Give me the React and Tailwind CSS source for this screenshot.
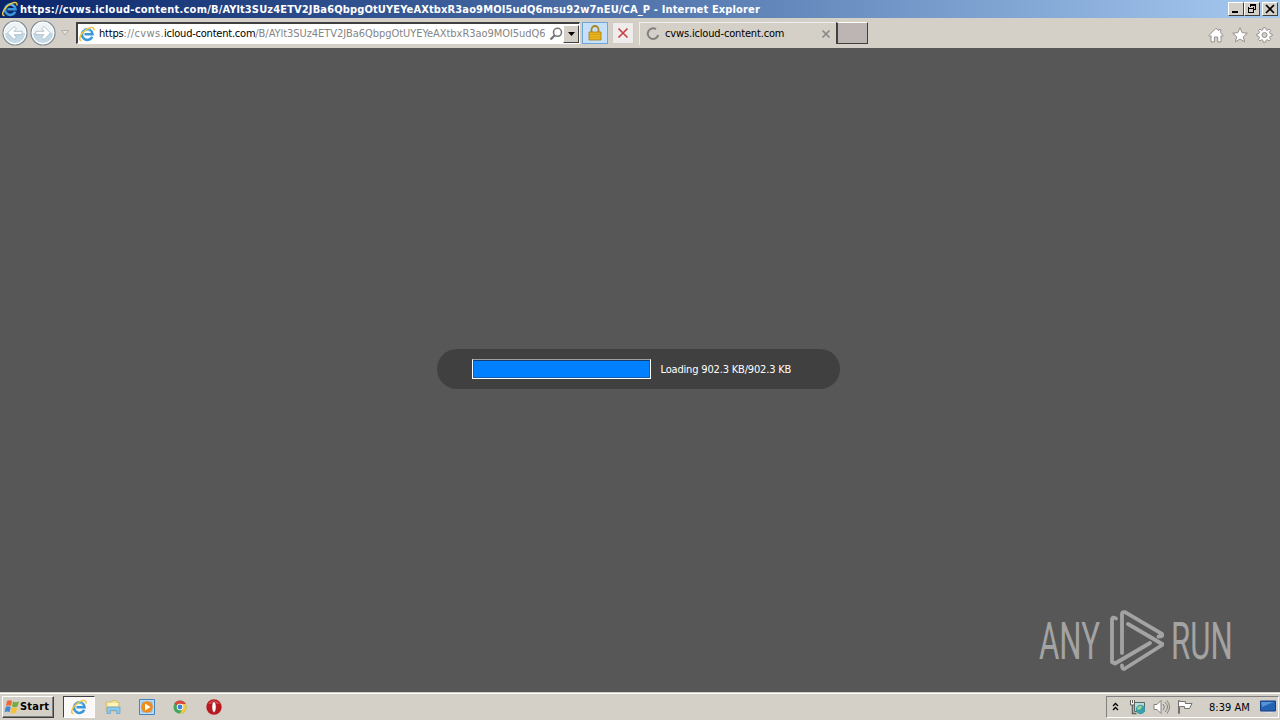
import React from 'react'

const IeIcon = ({ className }) => (
  <svg viewBox="0 0 16 16" className={className}>
    <path d="M13.2 10.700A5.300 5.300 0 1 1 13.600 8.300H5.500" fill="none" stroke="#3a97da" strokeWidth="2.500" />
    <path d="M4 6.400A4.600 4.600 0 0 1 12 5.600" fill="none" stroke="#86d3f7" strokeWidth="1" />
    <path d="M2.500 14.500C-.8 14.800.7 9 5.300 5.100 9.600 1.400 15.800-.3 14.900 4.500" fill="none" stroke="#f1c63c" strokeWidth="1.500" />
  </svg>
)

const NavButton = ({ flip }) => (
  <svg viewBox="0 0 26 26" className={flip ? 'h-[26px] w-[26px] -scale-x-100' : 'h-[26px] w-[26px]'}>
    <circle cx="13" cy="13" r="12" fill="#eef3f6" stroke="#7f8d97" strokeWidth="1.2" />
    <circle cx="13" cy="13" r="10.8" fill="none" stroke="#fff" strokeWidth="1" />
    <path d="M3 13a10 10 0 0 0 20 0Z" fill="#c3d9e6" />
    <path d="m5.500 13 6.500-6.500 2.500 2.300L12 11.300h8.200v3.400H12l2.500 2.500-2.500 2.300Z" fill="#fff" stroke="#a3b6c4" strokeWidth=".8" />
  </svg>
)

const WindowButton = ({ children, className = '' }) => (
  <button className={`flex h-[14px] w-4 items-center justify-center border border-t-white border-l-white border-r-[#404040] border-b-[#404040] bg-[#d4d0c8] ${className}`}>
    <svg viewBox="0 0 12 10" className="h-[10px] w-3 shrink-0" fill="none" stroke="#000" shapeRendering="crispEdges">
      {children}
    </svg>
  </button>
)

const TitleBar = () => (
  <header className="flex h-[18px] items-center bg-linear-to-r from-[#0a246a] to-[#a6caf0] pr-[2px] pl-[2px]">
    <IeIcon className="h-4 w-4 shrink-0" />
    <h1 className="ml-[2px] pt-px text-[11px] leading-[17px] font-bold tracking-[0.14px] whitespace-nowrap text-white">
      <span className="tracking-[0.26px]">https://cvws.icloud-content.com</span>/B/AYlt3SUz4ETV2JBa6QbpgOtUYEYeAXtbxR3ao9MOI5udQ6msu92w7nEU/CA_P - Internet Explorer
    </h1>
    <div className="ml-auto flex">
      <WindowButton>
        <path d="M2 8h6" strokeWidth="2" />
      </WindowButton>
      <WindowButton>
        <path d="M4 1h6M4 0h6M4 0v3M9.5 0v6M7 5.500h3M2 4h6M2.500 3v6M7.500 3v6M2 8.500h6" />
      </WindowButton>
      <WindowButton className="ml-[2px]">
        <path d="m2 1 8 8M10 1 2 9" strokeWidth="1.7" shapeRendering="auto" />
      </WindowButton>
    </div>
  </header>
)

const AddressBar = () => (
  <div className="flex h-[22px] w-[504px] items-center border border-t-2 border-l-2 border-t-[#404040] border-l-[#404040] border-r-white border-b-white bg-white">
    <IeIcon className="ml-px h-4 w-4 shrink-0" />
    <div className="ml-1 w-[446px] shrink-0 overflow-hidden pt-px text-[11px] leading-4 tracking-[-0.05px] whitespace-nowrap text-[#858585]">
      <span className="tracking-[-0.2px] text-black">https</span>
      <span className="tracking-[0.35px]">://cvws.</span>
      <span className="tracking-[-0.22px] text-black">icloud-content.com</span>
      /B/AYlt3SUz4ETV2JBa6QbpgOtUYEYeAXtbxR3ao9MOI5udQ6
    </div>
    <svg viewBox="0 0 14 14" className="ml-1 h-[14px] w-[14px] shrink-0" fill="none" stroke="#777">
      <circle cx="8.5" cy="5.3" r="4" strokeWidth="1.6" />
      <path d="m5.500 8.500-4 4" strokeWidth="2.3" />
    </svg>
    <button className="ml-auto flex h-[18px] w-4 shrink-0 items-center justify-center border border-t-white border-l-white border-r-[#404040] border-b-[#404040] bg-[#d4d0c8]">
      <svg viewBox="0 0 7 4" className="h-1 w-[7px] shrink-0"><path d="M0 0h7L3.500 4Z" /></svg>
    </button>
  </div>
)

const Toolbar = () => (
  <nav className="flex h-[30px] items-center bg-[#d4d0c8]">
    <div className="ml-[2px] flex gap-[2px]">
      <NavButton />
      <NavButton flip />
    </div>
    <svg viewBox="0 0 8 6" className="mr-[7px] ml-[5px] h-[6px] w-2"><path d="M.5.5h7L4 5Z" fill="#e6e2dd" stroke="#b5afaa" /></svg>
    <AddressBar />
    <button className="ml-[2px] flex h-[22px] w-[26px] items-center justify-center border border-[#70a5dc] bg-[#c7e0fa]">
      <svg viewBox="0 0 14 16" className="h-4 w-[14px]">
        <path d="M3.500 8V4.500a3.500 3.500 0 0 1 7 0V8" fill="none" stroke="#a88622" strokeWidth="1.8" />
        <path d="M1 7h12v8H1Z" fill="#e9b51f" stroke="#a77911" strokeWidth=".8" />
        <path d="M2 9.500h10M2 12h10" stroke="#d39c1a" strokeWidth=".8" />
      </svg>
    </button>
    <button className="ml-1 flex h-[22px] w-[22px] items-center justify-center border border-[#d0cbc7] bg-[#efedeb]">
      <svg viewBox="0 0 12 12" className="h-3 w-3" fill="none"><path d="m1.500 1.500 9 9M10.500 1.500l-9 9" stroke="#c93d45" strokeWidth="1.6" /></svg>
    </button>
    <div className="ml-[5px] flex h-[23px] w-[197px] items-center border-t border-l border-[#f0eeea]">
      <svg viewBox="0 0 14 14" className="ml-[6px] h-[14px] w-[14px]" fill="none"><path d="M10 2.200A5.300 5.300 0 1 0 12.200 8" stroke="#808080" strokeWidth="2" /></svg>
      <span className="ml-[5px] pt-px text-[11px] leading-4 tracking-[-0.16px] whitespace-nowrap">cvws.icloud-content.com</span>
      <svg viewBox="0 0 10 10" className="mr-[5px] ml-auto h-[10px] w-[10px]" fill="none"><path d="m1.500 1.500 7 7M8.500 1.500l-7 7" stroke="#888" strokeWidth="1.7" /></svg>
    </div>
    <button className="h-[22px] w-8 border border-t-white border-l-2 border-l-[#404040] border-r-[#404040] border-b-[#404040] bg-[#bdb5b3]" />
    <div className="mr-[7px] ml-auto flex items-center gap-2 pt-[3px]">
      <svg viewBox="0 0 16 16" className="h-4 w-4" fill="#fff" stroke="#95918e">
        <path d="M.8 8.500 8 1.200l2.700 2.500V2.500h2v3.300l2.500 2.700-1.200 1-1-.9v6.300H9.700V10H6.400v4.900H3V8.600l-1 .9Z" />
      </svg>
      <svg viewBox="0 0 16 16" className="h-4 w-4" fill="#fff" stroke="#95918e">
        <path d="m8 .8 2.100 4.800 5.200.6-3.900 3.400 1.100 5.200L8 12.100l-4.500 2.700 1.100-5.200L.7 6.200l5.200-.6Z" />
      </svg>
      <svg viewBox="0 0 16 16" className="h-4 w-[17px]" fill="#fff" stroke="#95918e">
        <path d="m6.700.8 2.600 0 .4 2 1.200.5 1.800-1.200 1.400 1.500-1.100 1.700.6 1.300 2 .4v2l-2 .4-.6 1.300 1.100 1.700-1.500 1.500-1.700-1.200-1.200.5-.4 2H6.700l-.4-2-1.200-.5-1.700 1.200-1.500-1.500L3 10.700l-.6-1.300-2-.4V7l2-.4L3 5.300 1.900 3.600l1.500-1.500 1.700 1.200 1.200-.5Z" />
        <circle cx="8" cy="8" r="2.500" fill="#d4d0c8" />
      </svg>
    </div>
  </nav>
)

const LoadingPill = () => (
  <div className="flex h-10 w-[403px] items-center rounded-full bg-[#404040] pl-[34.5px]">
    <div className="h-5 w-[179px] border border-t-[#a0a0a0] border-l-white border-r-white border-b-white bg-[#0080ff]">
      <div className="h-full border border-t-[#123e78] border-l-[#155eaf] border-r-[#155eaf] border-b-[#155eaf]" />
    </div>
    <span className="ml-[10px] pt-[2px] text-[11px] leading-4 tracking-[-0.17px] whitespace-nowrap text-white">Loading 902.3 KB/902.3 KB</span>
  </div>
)

const Watermark = () => (
  <div className="absolute top-[561px] left-[1039px] flex h-[64px] w-[192px] items-center font-['Roboto'] text-[52px] leading-none text-[#a3a3a3]">
    <div className="w-[62px] pt-[2px]"><span className="inline-block origin-left scale-x-[0.6]">ANY</span></div>
    <svg viewBox="0 0 56 62" className="mx-[7px] h-[62px] w-14 shrink-0" fill="none" stroke="#a3a3a3" strokeWidth="3.800" strokeLinejoin="round" strokeLinecap="round">
      <path d="M8 8.500Q4 6 4 10v42l3 1.500L42 33" />
      <path d="M14 43V4q0-2.500 3-1.800l37 21.700q1.500 2.600-3.500 2.600M20 14l35 20.500-38 24q-3 1.500-3-3" />
    </svg>
    <div className="w-[60px] pt-[2px]"><span className="inline-block origin-left scale-x-[0.6]">RUN</span></div>
  </div>
)

const ExplorerIcon = () => (
  <svg viewBox="0 0 16 16" className="h-4 w-4">
    <path d="M1 3h5l1-1.500h4L12 3h2v9H1Z" fill="#f1df91" stroke="#cdb565" strokeWidth=".7" />
    <path d="M3 4h10v3H3Z" fill="#fff4b5" />
    <path d="M2 14.500V8h13v6.500h-3.500v-3h-6v3Z" fill="#8cc6e8" stroke="#5ba0cf" strokeWidth=".7" />
  </svg>
)

const MediaIcon = () => (
  <svg viewBox="0 0 16 16" className="h-4 w-4">
    <path d="M.5.5h15v15H.5Z" fill="#bddcf6" stroke="#4184bd" />
    <path d="M2.500 2.500h11v11h-11Z" fill="#8abce3" />
    <circle cx="8" cy="8" r="5.800" fill="#f18a17" />
    <path d="m6 4.600 5.500 3.400L6 11.400Z" fill="#fff" />
  </svg>
)

const ChromeIcon = () => (
  <svg viewBox="0 0 16 16" className="h-[14px] w-[14px]">
    <circle cx="8" cy="8" r="7.500" fill="#44a65a" />
    <path d="M8 8 1.500 4.200A7.500 7.500 0 0 1 14.500 4.200Z" fill="#d94a3d" />
    <path d="M8 4.500h6.600A7.500 7.500 0 0 1 8 15.500L11 10Z" fill="#f5c93b" />
    <circle cx="8" cy="8" r="3.700" fill="#fff" />
    <circle cx="8" cy="8" r="2.800" fill="#447fd3" />
  </svg>
)

const OperaIcon = () => (
  <svg viewBox="0 0 16 16" className="ml-px h-4 w-4">
    <circle cx="8" cy="8" r="7.700" fill="#ba1920" />
    <path d="M2 5a7 7 0 0 1 12 0Z" fill="#cf4546" />
    <ellipse cx="8" cy="8" rx="2.200" ry="5.500" fill="#fff" stroke="#8d1015" strokeWidth=".7" />
  </svg>
)

const Tray = () => (
  <div className="mr-px ml-auto flex h-[22px] w-[173px] items-center border border-t-[#808080] border-l-[#808080] border-r-white border-b-white">
    <svg viewBox="0 0 7 9" className="mb-[2px] ml-[5px] h-[9px] w-[7px]" fill="none" stroke="#000" strokeWidth="1.300"><path d="m1 4 2.500-2.500L6 4M1 8l2.500-2.500L6 8" /></svg>
    <svg viewBox="0 0 18 16" className="ml-[10px] h-4 w-[18px]">
      <path d="M5.500 3.500h10v9h-10Z" fill="#b9ded9" stroke="#576966" />
      <path d="M3.500 6v8.500h4" fill="none" stroke="#62615e" strokeWidth="1.5" />
      <path d="M1.500 1v5h4V1M3.500 1v3" fill="#f5f4f1" stroke="#62615e" />
      <circle cx="11.500" cy="10.500" r="4.700" fill="#3b9fa8" />
      <path d="M8 9q2-3 5-2l-1 3-3 1Z" fill="#9ad29f" />
    </svg>
    <svg viewBox="0 0 17 16" className="ml-[6px] h-4 w-[17px]" fill="none" stroke="#85827e">
      <path d="M1 5.500h3l4-4v13l-4-4H1Z" fill="#fff" />
      <path d="M10 5q3 3 0 6M12 3q5 5 0 10M14 1.500q5 6.500 0 13" />
    </svg>
    <svg viewBox="0 0 16 16" className="ml-[7px] h-4 w-4" fill="#fff" stroke="#74716e">
      <path d="M1.500 14.500v-13h1V2.500h6v2H15L12.500 9.500H7.500v-2h-5v7Z" />
    </svg>
    <span className="ml-4 pt-px text-[11px] leading-4 tracking-[0.03px] whitespace-nowrap">8:39 AM</span>
    <svg viewBox="0 0 16 14" className="mr-[2px] ml-auto h-[14px] w-4">
      <path d="M.5 1h15v10H.5Z" fill="#2462b4" stroke="#173f84" />
      <path d="M1 2h13L2 7Z" fill="#5393d7" />
      <path d="M5 12h7v1H5Z" fill="#d1e1f3" />
    </svg>
  </div>
)

const Taskbar = () => (
  <footer className="flex h-7 items-center border-t border-[#d4d0c8] bg-[#d4d0c8] pt-px shadow-[inset_0_1px_0_#fff]">
    <button className="ml-[2px] flex h-[22px] w-[52px] items-center border border-t-white border-l-white border-r-[#404040] border-b-[#404040] shadow-[inset_-1px_-1px_0_#808080]">
      <svg viewBox="0 0 16 16" className="ml-px h-4 w-4 shrink-0">
        <path d="M3 2q2.500-1.500 5 0L7 7q-2.500-1.500-5 0Z" fill="#ec6832" />
        <path d="M9 2.500q3 1.500 6-.2L13.500 7.500q-3 1.500-5.500-.2Z" fill="#71ad40" />
        <path d="M1.700 8q2.500-1.500 5 0l-1.200 5.200q-2.500-1.500-5 0Z" fill="#4288cf" />
        <path d="M7.700 8.300q3 1.500 5.500.2L12 13.700q-3 1.500-5.500-.2Z" fill="#f6c336" />
      </svg>
      <span className="pt-px text-[11px] font-bold tracking-[0.2px]">Start</span>
    </button>
    <button className="ml-[9px] flex h-[22px] w-8 items-center justify-center border border-t-[#404040] border-l-[#404040] border-r-white border-b-white bg-[#faf9f7]">
      <IeIcon className="h-4 w-4" />
    </button>
    <div className="ml-[10px] flex items-center gap-[18px]">
      <ExplorerIcon />
      <MediaIcon />
      <ChromeIcon />
      <OperaIcon />
    </div>
    <Tray />
  </footer>
)

export default function App() {
  return (
    <div className="flex h-[720px] w-[1280px] flex-col overflow-hidden bg-[#d4d0c8] font-['DejaVu_Sans_Condensed','DejaVu_Sans',sans-serif] text-black">
      <TitleBar />
      <Toolbar />
      <main className="relative flex h-[644px] items-center justify-center bg-[#575757] pr-[3px] pb-[2px]">
        <LoadingPill />
        <Watermark />
      </main>
      <Taskbar />
    </div>
  )
}
